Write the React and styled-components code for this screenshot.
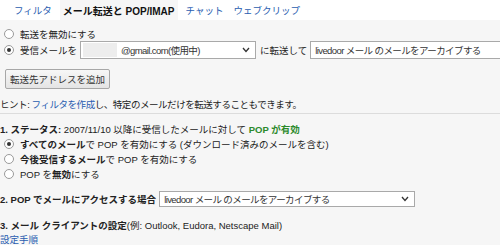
import React from 'react';
import styled, { createGlobalStyle } from 'styled-components';

const GlobalStyle = createGlobalStyle`
  html, body {
    margin: 0;
    padding: 0;
    background: #f6f6f6;
  }
  body {
    font-family: "Liberation Sans", "Noto Sans CJK JP", sans-serif;
    font-size: 9.5px;
    color: #222;
    overflow: hidden;
  }
`;

const Page = styled.div`
  width: 500px;
  height: 245px;
  overflow: hidden;
`;

const TabBar = styled.div`
  height: 20px;
  display: flex;
  align-items: stretch;
  gap: 6px;
  background: #fff;
  padding-left: 12px;
`;

const Tab = styled.span`
  display: flex;
  align-items: center;
  padding: 0 ${(p) => (p.$active ? 3 : 2)}px;
  font-size: ${(p) => (p.$active ? 10 : 9.5)}px;
  white-space: nowrap;
  color: ${(p) => (p.$active ? '#111' : '#2a5db0')};
  font-weight: ${(p) => (p.$active ? 'bold' : 'normal')};
  background: ${(p) => (p.$active ? '#f6f6f6' : 'transparent')};
`;

const Content = styled.div`
  padding-top: 6px;
  display: flex;
  flex-direction: column;
`;

const Row = styled.div`
  display: flex;
  align-items: center;
  height: ${(p) => p.$h || 15}px;
  margin-top: ${(p) => p.$mt || 0}px;
  padding-left: ${(p) => p.$indent || 0}px;
  letter-spacing: ${(p) => (p.$tight ? '-0.45px' : 'normal')};
  white-space: nowrap;
`;

const RadioDot = styled.span`
  width: 8px;
  height: 8px;
  border-radius: 50%;
  border: 1px solid #9a9a9a;
  background: #fff;
  margin-right: 6px;
  flex: none;
  display: flex;
  align-items: center;
  justify-content: center;
  &::after {
    content: '';
    width: 4px;
    height: 4px;
    border-radius: 50%;
    background: ${(p) => (p.$checked ? '#333' : 'transparent')};
  }
`;

const SelectBox = styled.div`
  box-sizing: border-box;
  height: ${(p) => p.$h || 18}px;
  width: ${(p) => p.$w}px;
  flex: none;
  margin: 0 4px 0 3px;
  background: #fff;
  border: 1px solid #a9a9a9;
  display: flex;
  align-items: center;
  padding-left: ${(p) => p.$pl || 4}px;
  padding-right: 5px;
  color: #333;
`;

const SelectText = styled.span`
  flex: 1;
  letter-spacing: -0.6px;
  white-space: nowrap;
`;

const Blur = styled.span`
  display: inline-block;
  width: 34px;
  height: 14px;
  margin-right: 4px;
  background: #ededed;
`;

const Button = styled.div`
  box-sizing: border-box;
  height: 20px;
  width: 105px;
  margin-left: 5px;
  display: flex;
  align-items: center;
  justify-content: center;
  background: linear-gradient(#f7f7f7, #e4e4e4);
  border: 1px solid #a7a7a7;
  border-radius: 2px;
  color: #333;
`;

const Link = styled.span`
  color: #2a5db0;
`;

const Divider = styled.div`
  height: 0;
  border-top: 1px solid #dcdcdc;
  margin-top: ${(p) => p.$mt || 0}px;
`;

const Bold = styled.b`
  font-weight: bold;
  color: ${(p) => p.$color || 'inherit'};
`;

const Chevron = () => (
  <svg width="8" height="6" viewBox="0 0 8 6">
    <polyline points="1,1 4,4.5 7,1" fill="none" stroke="#333" strokeWidth="1.3" />
  </svg>
);

export default function App() {
  return (
    <Page>
      <GlobalStyle />
      <TabBar>
        <Tab>フィルタ</Tab>
        <Tab $active>メール転送と POP/IMAP</Tab>
        <Tab>チャット</Tab>
        <Tab>ウェブクリップ</Tab>
      </TabBar>
      <Content>
        <Row $indent={4}>
          <RadioDot />
          転送を無効にする
        </Row>
        <Row $indent={4} $h={18}>
          <RadioDot $checked />
          受信メールを
          <SelectBox $w={176} $pl={2}>
            <Blur />
            <SelectText>@gmail.com(使用中)</SelectText>
            <Chevron />
          </SelectBox>
          に転送して
          <SelectBox $w={200}>
            <SelectText>livedoor メール のメールをアーカイブする</SelectText>
          </SelectBox>
        </Row>
        <Row $mt={10} $h={20}>
          <Button>転送先アドレスを追加</Button>
        </Row>
        <Row $mt={7} $h={16} $tight>
          ヒント: <Link>&nbsp;フィルタを作成</Link>し、特定のメールだけを転送することもできます。
        </Row>
        <Divider $mt={1} />
        <Row $mt={8} $h={14}>
          <Bold>1. ステータス:</Bold>&nbsp;2007/11/10 以降に受信したメールに対して&nbsp;
          <Bold $color="#2b8a2b">POP が有効</Bold>
        </Row>
        <Row $indent={4}>
          <RadioDot $checked />
          <Bold>すべてのメール</Bold>で POP を有効にする (ダウンロード済みのメールを含む)
        </Row>
        <Row $indent={4}>
          <RadioDot />
          <Bold>今後受信するメール</Bold>で POP を有効にする
        </Row>
        <Row $indent={4}>
          <RadioDot />
          POP を<Bold>無効</Bold>にする
        </Row>
        <Row $mt={9} $h={18}>
          <Bold>2. POP でメールにアクセスする場合</Bold>
          <SelectBox $w={256} $h={16}>
            <SelectText>livedoor メール のメールをアーカイブする</SelectText>
            <Chevron />
          </SelectBox>
        </Row>
        <Row $mt={10} $h={14}>
          <Bold>3. メール クライアントの設定</Bold>(例: Outlook, Eudora, Netscape Mail)
        </Row>
        <Row $h={14}>
          <Link>設定手順</Link>
        </Row>
      </Content>
    </Page>
  );
}
